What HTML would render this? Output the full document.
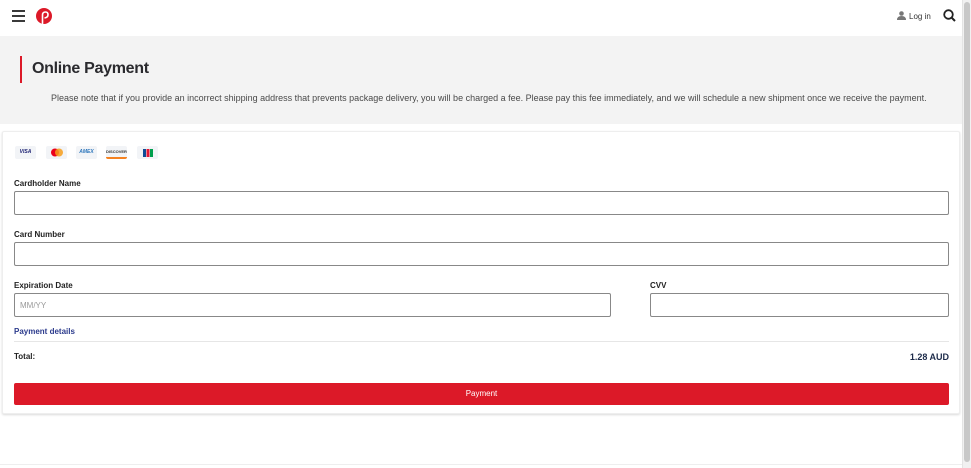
<!DOCTYPE html>
<html><head><meta charset="utf-8"><style>
*{box-sizing:border-box;margin:0;padding:0}
body{width:971px;height:468px;overflow:hidden;background:#fff;font-family:"Liberation Sans",sans-serif;position:relative;color:#222}
.sb{position:absolute;right:0;top:0;width:9px;height:468px;background:#f1f1f1;border-left:1px solid #e4e4e4}
.sb i{position:absolute;left:1px;top:2px;width:6px;height:460px;background:#c8c8c8;border-radius:3px}
.hdr{position:absolute;left:0;top:0;width:962px;height:36px;background:#fff}
.band{position:absolute;left:0;top:36px;width:962px;height:88px;background:#f3f3f3}
.bar{position:absolute;left:20px;top:20px;width:2px;height:27px;background:#dc1928}
h1{position:absolute;left:32px;top:24px;font-size:16px;font-weight:bold;color:#2a2a2e;letter-spacing:-0.3px}
.note{position:absolute;left:51px;top:57px;font-size:9px;color:#4a4a4a}
.card{position:absolute;left:2px;top:131px;width:958px;height:283px;background:#fff;border:1px solid #eee;box-shadow:0 1px 2px rgba(0,0,0,.15);border-radius:2px}
.lbl{position:absolute;left:11px;font-size:8px;font-weight:bold;color:#222}
.inp{position:absolute;height:24px;border:1px solid #888;border-radius:2px;background:#fff}
.badge{position:absolute;top:14px;width:21px;height:13px;background:#f2f4f7;border-radius:2px;font-size:5px;font-weight:bold;text-align:center;line-height:13px}
</style></head><body>
<div class="hdr">
 <svg style="position:absolute;left:12px;top:10px" width="13" height="12"><rect y="0" width="13" height="2" fill="#3a3a3a"/><rect y="5" width="13" height="2" fill="#3a3a3a"/><rect y="10" width="13" height="2" fill="#3a3a3a"/></svg>
 <svg style="position:absolute;left:36px;top:8px" width="16" height="16" viewBox="0 0 16 16"><circle cx="8" cy="8" r="8" fill="#dc1928"/><path d="M6.5 16 V7 Q6.5 4 9.5 4 Q12 4 12 6.8 Q12 9.5 8.5 10" stroke="#fff" stroke-width="1.6" fill="none"/></svg>
 <svg style="position:absolute;left:897px;top:11px" width="9" height="9" viewBox="0 0 9 9"><circle cx="4.5" cy="2.5" r="2.3" fill="#777"/><path d="M0 9 Q0 5 4.5 5 Q9 5 9 9Z" fill="#777"/></svg>
 <div style="position:absolute;left:909px;top:12px;font-size:8px;color:#333">Log in</div>
 <svg style="position:absolute;left:943px;top:9px" width="13" height="13" viewBox="0 0 13 13"><circle cx="5.5" cy="5.5" r="4.3" stroke="#222" stroke-width="1.8" fill="none"/><path d="M8.5 8.5 L12 12" stroke="#222" stroke-width="2"/></svg>
</div>
<div class="band"><div class="bar"></div><h1>Online Payment</h1>
<div class="note">Please note that if you provide an incorrect shipping address that prevents package delivery, you will be charged a fee. Please pay this fee immediately, and we will schedule a new shipment once we receive the payment.</div></div>
<div class="card">
 <div class="badge" style="left:12px;color:#1a1f71;font-style:italic">VISA</div>
 <div class="badge" style="left:43px"><svg width="14" height="9" style="margin-top:2px"><circle cx="5" cy="4.5" r="4" fill="#eb001b"/><circle cx="9" cy="4.5" r="4" fill="#f79e1b" opacity=".85"/></svg></div>
 <div class="badge" style="left:73px;color:#2e77bc;font-style:italic">AMEX</div>
 <div class="badge" style="left:103px;color:#333;font-size:4px;line-height:11px;border-bottom:2px solid #f58220">DISCOVER</div>
 <div class="badge" style="left:134px"><svg width="10" height="8" style="margin-top:2.5px"><rect width="3" height="8" fill="#0e4c96"/><rect x="3.5" width="3" height="8" fill="#e21836"/><rect x="7" width="3" height="8" fill="#009f4d"/></svg></div>
 <div class="lbl" style="top:47px">Cardholder Name</div>
 <div class="inp" style="left:11px;top:59px;width:935px"></div>
 <div class="lbl" style="top:98px">Card Number</div>
 <div class="inp" style="left:11px;top:110px;width:935px"></div>
 <div class="lbl" style="top:149px">Expiration Date</div>
 <div class="inp" style="left:11px;top:161px;width:597px"><span style="position:absolute;left:5px;top:7px;font-size:8px;color:#999">MM/YY</span></div>
 <div class="lbl" style="left:647px;top:149px">CVV</div>
 <div class="inp" style="left:647px;top:161px;width:299px"></div>
 <div class="lbl" style="top:195px;color:#2b3a8c">Payment details</div>
 <div style="position:absolute;left:11px;top:209px;width:935px;height:1px;background:#e6e6e6"></div>
 <div class="lbl" style="top:220px">Total:</div>
 <div style="position:absolute;right:10px;top:220px;font-size:9px;font-weight:bold;color:#1d2b4a">1.28 AUD</div>
 <div style="position:absolute;left:11px;top:251px;width:935px;height:22px;background:#dc1928;border-radius:2px;color:#fff;font-size:8px;text-align:center;line-height:22px">Payment</div>
</div>
<div style="position:absolute;left:0;top:464px;width:962px;height:1px;background:#eee"></div>
<div class="sb"><i></i></div>
</body></html>
